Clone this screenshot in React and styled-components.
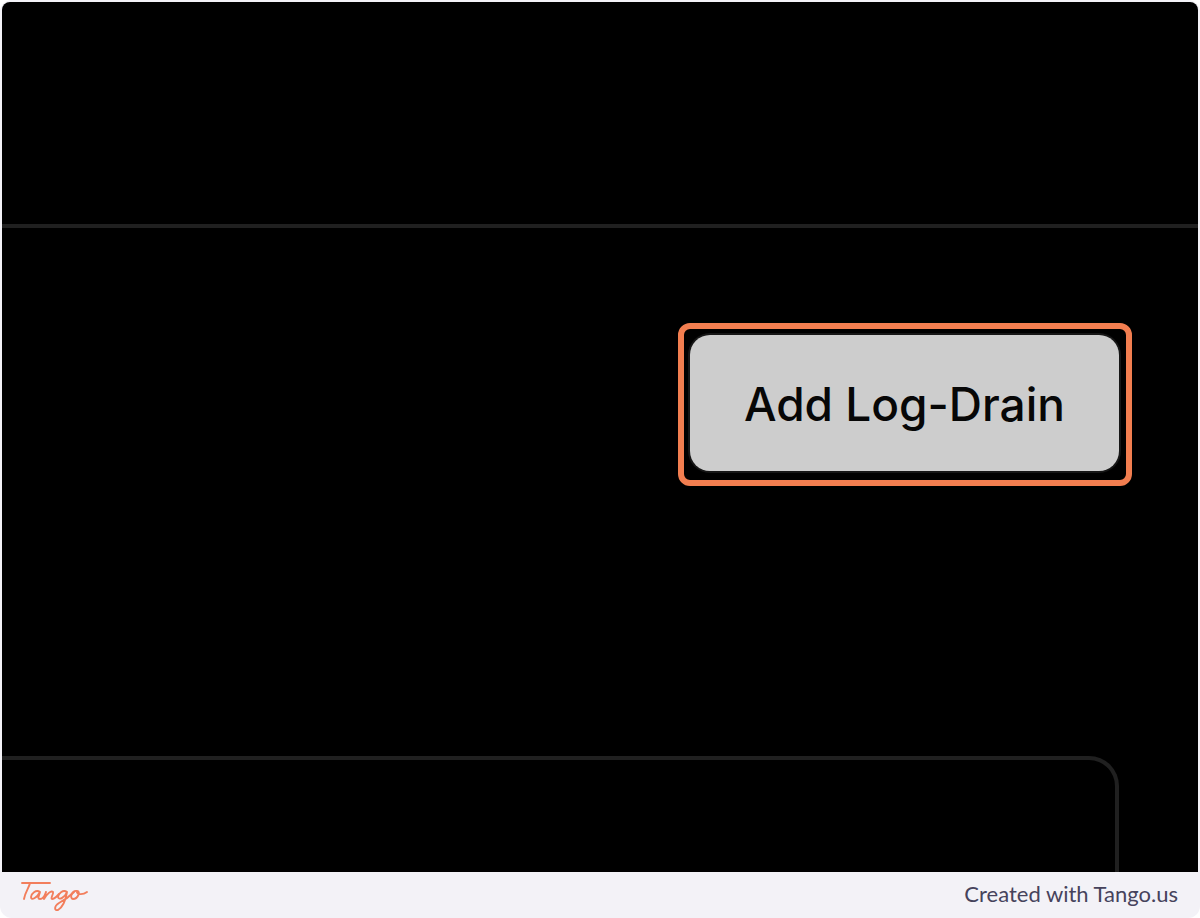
import styled, { createGlobalStyle } from 'styled-components'

const GlobalStyle = createGlobalStyle`
  * {
    box-sizing: border-box;
  }
  body {
    margin: 0;
    background: #ffffff;
  }
`
const Frame = styled.div`
  display: flex;
  flex-direction: column;
  min-height: 100vh;
  padding: 2px 2px 0;
  border-radius: 12px;
  background: #f3f2f7;
`
const Screen = styled.main`
  display: flex;
  flex-direction: column;
  flex: 1;
  border-radius: 8px 8px 0 0;
  background: #000000;
  overflow: hidden;
`
const TopBar = styled.header`
  height: 226px;
  border-bottom: 4px solid #202020;
`
const Actions = styled.div`
  display: flex;
  justify-content: flex-end;
  padding: 95px 66px 0;
`
const Highlight = styled.div`
  padding: 6px 7px 9px 6px;
  border: 6px solid #f27e50;
  border-radius: 12px;
`
const Button = styled.button`
  display: block;
  height: 136px;
  padding: 2px 54px 0;
  border: none;
  border-radius: 20px;
  background: #cdcdcd;
  box-shadow: 0 0 0 2px #161616;
  color: #070707;
  font-family: Inter, sans-serif;
  font-size: 46px;
  font-weight: 500;
  white-space: nowrap;
`
const Panel = styled.section`
  flex: 1;
  margin: 270px 79px 0 0;
  border: 4px solid #202020;
  border-width: 4px 4px 0 0;
  border-top-right-radius: 30px;
`
const Footer = styled.footer`
  display: flex;
  align-items: center;
  justify-content: space-between;
  height: 46px;
  padding: 0 18px;
`
const Logo = styled.svg`
  display: block;
  width: 70px;
  height: 34px;
`
const Credit = styled.p`
  margin: 0;
  padding: 0 2px 2px 0;
  color: #46435c;
  font-family: Lato, sans-serif;
  font-size: 22px;
  line-height: 28px;
`

const TangoLogo = () => (
  <Logo viewBox="0 0 70 34" role="img" aria-label="Tango">
    <g fill="none" stroke="#f27e5c" strokeWidth="1.9" strokeLinecap="round" strokeLinejoin="round">
      <path d="M2 5 L30 5" />
      <path d="M10 5 C9 10 5 14 4 21" />
      <path d="M20 14 C16 11 11 16 11 19 C11 23 17 20 20 14 C19 18 17 21 20 21 C23 21 25 17 26 14 L24 21 C27 16 31 12 33 14 C34 16 30 20 32 21 C35 21 37 18 39 16" />
      <path d="M47 14 C43 11 38 16 38 19 C39 23 45 19 47 14 C46 20 43 29 38 32 C34 33 34 28 39 25 C45 22 50 18 54 14" />
      <path d="M57 13 C52 12 49 20 53 21 C58 21 61 13 57 13 C56 17 63 17 67 14" />
    </g>
  </Logo>
)

export default function App() {
  return (
    <>
      <GlobalStyle />
      <Frame>
        <Screen>
          <TopBar />
          <Actions>
            <Highlight>
              <Button type="button">Add Log-Drain</Button>
            </Highlight>
          </Actions>
          <Panel />
        </Screen>
        <Footer>
          <TangoLogo />
          <Credit>Created with Tango.us</Credit>
        </Footer>
      </Frame>
    </>
  )
}
